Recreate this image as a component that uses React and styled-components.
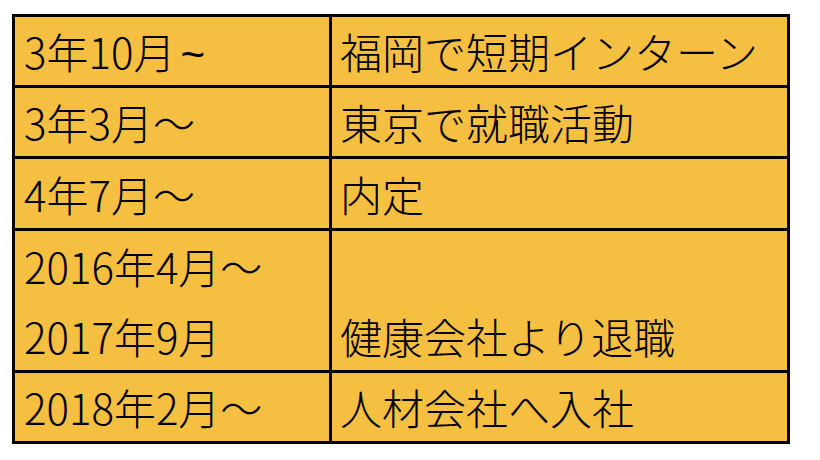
import React from "react";
import styled, { createGlobalStyle } from "styled-components";

const Global = createGlobalStyle`
  html, body { margin: 0; padding: 0; background: #ffffff; }
  body { font-family: "Noto Sans CJK JP", "Noto Sans", sans-serif; }
`;

const Page = styled.div`
  padding: 14px 0 0 12px;
`;

const Grid = styled.div`
  display: grid;
  grid-template-columns: 314px 455px;
  grid-template-rows: 68px 68px 69px 139px 68px;
  gap: 3px;
  padding: 3px;
  width: max-content;
  background: #000000;
`;

const Cell = styled.div`
  background: #f5bf41;
  display: flex;
  flex-direction: column;
  justify-content: center;
  padding-left: ${(p) => p.$pad}px;
  font-family: "Noto Sans CJK JP", "Noto Sans", sans-serif;
  font-weight: 300;
  font-size: 42px;
  color: #000000;
`;

const Line = styled.div`
  height: 70px;
  line-height: 70px;
  white-space: nowrap;
`;

const Tilde = styled.span`
  font-family: "Liberation Sans", Arial, sans-serif;
  font-weight: 400;
  margin-left: 5px;
`;

const rows = [
  { left: [["3年10月", "~"]], right: ["福岡で短期インターン"] },
  { left: ["3年3月\u301C"], right: ["東京で就職活動"] },
  { left: ["4年7月\u301C"], right: ["内定"] },
  { left: ["2016年4月\u301C", "2017年9月"], right: ["\u00A0", "健康会社より退職"] },
  { left: ["2018年2月\u301C"], right: ["人材会社へ入社"] },
];

export default function App() {
  return (
    <>
      <Global />
      <Page>
        <Grid>
          {rows.map((r, i) => (
            <React.Fragment key={i}>
              <Cell $pad={9}>
                {r.left.map((t, j) => (
                  <Line key={j}>
                    {Array.isArray(t) ? (
                      <>
                        {t[0]}
                        <Tilde>{t[1]}</Tilde>
                      </>
                    ) : (
                      t
                    )}
                  </Line>
                ))}
              </Cell>
              <Cell $pad={8}>
                {r.right.map((t, j) => (
                  <Line key={j}>{t}</Line>
                ))}
              </Cell>
            </React.Fragment>
          ))}
        </Grid>
      </Page>
    </>
  );
}
